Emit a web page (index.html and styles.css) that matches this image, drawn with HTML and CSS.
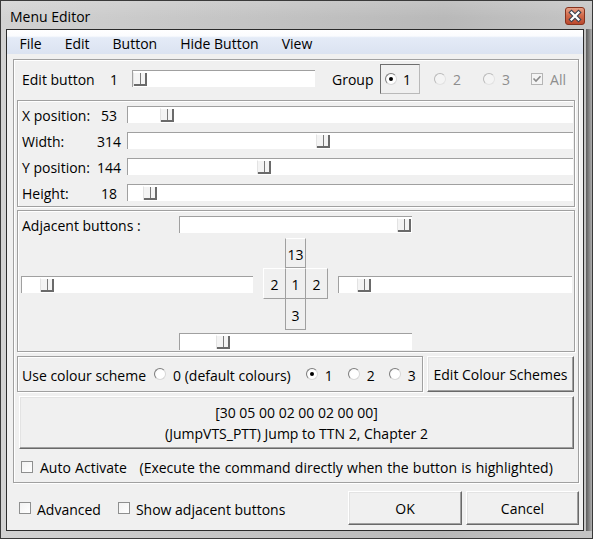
FILE: index.html
```html
<!DOCTYPE html>
<html>
<head>
<meta charset="utf-8">
<title>Menu Editor</title>
<link rel="stylesheet" href="styles.css">
</head>
<body>
<div class="window">
  <div class="titlebar">
    <span class="title">Menu Editor</span>
    <svg class="close" width="20" height="18" viewBox="0 0 20 18">
      <defs>
        <linearGradient id="cg" x1="0" y1="0" x2="0" y2="1">
          <stop offset="0" stop-color="#e8a48a"/>
          <stop offset="0.45" stop-color="#d26c4d"/>
          <stop offset="1" stop-color="#b9462c"/>
        </linearGradient>
      </defs>
      <rect x="0.5" y="0.5" width="19" height="17" rx="2.5" fill="url(#cg)" stroke="#86321d"/>
      <path d="M6.5 5.5 L13.5 12.5 M13.5 5.5 L6.5 12.5" stroke="#3d4250" stroke-width="4.4" stroke-linecap="square" fill="none"/>
      <path d="M6.5 5.5 L13.5 12.5 M13.5 5.5 L6.5 12.5" stroke="#ffffff" stroke-width="2.2" stroke-linecap="square" fill="none"/>
    </svg>
  </div>
  <div class="frame">
    <div class="client">
      <div class="menubar">
        <span class="menu-item">File</span>
        <span class="menu-item">Edit</span>
        <span class="menu-item">Button</span>
        <span class="menu-item">Hide Button</span>
        <span class="menu-item">View</span>
      </div>
      <div class="content">
        <div class="outer etched">
          <div class="row-edit">
            <span class="edit-label">Edit button</span>
            <span class="edit-num">1</span>
            <div class="slider edit-slider"><i class="thumb" style="left:0px"></i></div>
            <span class="group-label">Group</span>
            <div class="groupbox">
              <span class="opt"><i class="rb on"></i>1</span>
            </div>
            <span class="opt dis opt-g2"><i class="rb"></i>2</span>
            <span class="opt dis opt-g3"><i class="rb"></i>3</span>
            <span class="opt dis opt-all"><i class="cb checked"><svg width="10" height="10" viewBox="0 0 10 10"><path d="M1.5 4.5 L4 7 L8.5 2.2" stroke="#8a8a8a" stroke-width="1.6" fill="none"/></svg></i>All</span>
          </div>

          <div class="pos-box etched">
            <div class="pos-row"><span class="lbl">X position:</span><span class="num">53</span><div class="slider"><i class="thumb" style="left:32px"></i></div></div>
            <div class="pos-row"><span class="lbl">Width:</span><span class="num">314</span><div class="slider"><i class="thumb" style="left:188px"></i></div></div>
            <div class="pos-row"><span class="lbl">Y position:</span><span class="num">144</span><div class="slider"><i class="thumb" style="left:129px"></i></div></div>
            <div class="pos-row"><span class="lbl">Height:</span><span class="num">18</span><div class="slider"><i class="thumb" style="left:15px"></i></div></div>
          </div>

          <div class="adj-box etched">
            <span class="adj-label">Adjacent buttons :</span>
            <div class="slider adj-top"><i class="thumb" style="left:217px"></i></div>
            <div class="slider adj-left"><i class="thumb" style="left:18px"></i></div>
            <div class="cells">
              <span class="cell c-up">13</span>
              <span class="cell c-left">2</span>
              <span class="cell c-mid">1</span>
              <span class="cell c-right">2</span>
              <span class="cell c-down">3</span>
            </div>
            <div class="slider adj-right"><i class="thumb" style="left:18px"></i></div>
            <div class="slider adj-bottom"><i class="thumb" style="left:36px"></i></div>
          </div>

          <div class="colour-row">
            <div class="colour-box etched">
              <span class="colour-label">Use colour scheme</span>
              <span class="opt opt-c0"><i class="rb"></i>0 (default colours)</span>
              <span class="opt opt-c"><i class="rb on"></i>1</span>
              <span class="opt opt-c"><i class="rb"></i>2</span>
              <span class="opt opt-c3"><i class="rb"></i>3</span>
            </div>
            <button class="btn edit-cs">Edit Colour Schemes</button>
          </div>

          <button class="btn cmd">
            <span class="cmd-line">[30 05 00 02 00 02 00 00]</span>
            <span class="cmd-line">(JumpVTS_PTT) Jump to TTN 2, Chapter 2</span>
          </button>

          <div class="auto-row">
            <i class="cb"></i><span class="auto-text">Auto Activate&nbsp;&nbsp; (Execute the command directly when the button is highlighted)</span>
          </div>
        </div>

        <div class="bottom-row">
          <span class="opt opt-adv"><i class="cb"></i>Advanced</span>
          <span class="opt opt-show"><i class="cb"></i>Show adjacent buttons</span>
          <span class="spacer"></span>
          <button class="btn ok">OK</button>
          <button class="btn cancel">Cancel</button>
        </div>
      </div>
    </div>
    <div class="frame-right"></div>
  </div>
</div>
</body>
</html>
```

FILE: styles.css
```css
* {
  box-sizing: border-box;
  margin: 0;
  padding: 0;
}

html, body {
  width: 593px;
  height: 539px;
  overflow: hidden;
  background: #ffffff;
}

body {
  font-family: "Open Sans", "Noto Sans", sans-serif;
  font-size: 14px;
  color: #000;
}

.window {
  width: 593px;
  height: 539px;
  display: flex;
  flex-direction: column;
  border: 1px solid #3a3a3a;
  background: linear-gradient(to right, #d2d2d2 0%, #c6c6c6 35%, #b9b9b9 75%, #c4c4c4 100%);
}

.titlebar {
  height: 28px;
  flex: none;
  display: flex;
  align-items: center;
  padding: 0 7px 0 9px;
  background: linear-gradient(to bottom, rgba(255,255,255,0.15), rgba(255,255,255,0) 60%);
}

.title {
  flex: 1;
  line-height: 26px;
  padding-top: 3px;
  color: #000;
}

.close {
  flex: none;
  margin-top: 2px;
}

.frame {
  flex: 1;
  display: flex;
  padding: 0 0 7px 5px;
}

.client {
  width: 578px;
  flex: none;
  display: flex;
  flex-direction: column;
  border: 1px solid #2b2b2b;
  background: #f0f0f0;
}

.frame-right {
  flex: 1;
  margin-left: 2px;
  background: linear-gradient(to right, #5c5c5c, #8a8a8a 60%, #b0b0b0);
}

.menubar {
  height: 24px;
  flex: none;
  display: flex;
  padding-left: 1px;
  background: linear-gradient(to bottom, #ffffff 0%, #fbfcfe 25%, #e4ebf7 32%, #dbe3f1 100%);
}

.menu-item {
  padding: 4px 11.5px 0;
  line-height: 20px;
}

.content {
  flex: 1;
  display: flex;
  flex-direction: column;
  padding: 5px 4px 0 6px;
}

.etched {
  border: 1px solid #a0a0a0;
  box-shadow: inset 1px 1px #ffffff, 1px 1px #ffffff;
}

.outer {
  height: 424px;
  flex: none;
  display: flex;
  flex-direction: column;
  padding: 0 3px;
}

/* text nudged to sit on the same baseline as the original UI font */
.row-edit > span,
.pos-row > span,
.colour-box > span,
.auto-text,
.bottom-row .opt,
.adj-label,
.cell {
  padding-top: 2px;
}

/* ---------- sliders ---------- */
.slider {
  position: relative;
  height: 17px;
  background: #ffffff;
  border-top: 1px solid #a0a0a0;
  border-left: 1px solid #a0a0a0;
}

.thumb {
  position: absolute;
  top: 1px;
  width: 14px;
  height: 14px;
  background: #f4f4f4;
  border-top: 1px solid #ffffff;
  border-left: 1px solid #e3e3e3;
  box-shadow: inset -2px -2px #6a6a6a;
}

.thumb::after {
  content: "";
  position: absolute;
  left: 6px;
  top: 0;
  width: 1px;
  height: 11px;
  background: #7a7a7a;
}

/* ---------- check / radio ---------- */
.opt {
  display: flex;
  align-items: center;
  gap: 7px;
  white-space: nowrap;
}

.opt.dis {
  color: #8d8d8d;
}

.rb {
  position: relative;
  flex: none;
  width: 12px;
  height: 12px;
  border-radius: 50%;
  border: 1px solid;
  border-color: #7d7d7d #d8d8d8 #d8d8d8 #7d7d7d;
  background: radial-gradient(circle at 60% 60%, #ffffff 0%, #ffffff 50%, #ececec 100%);
}

.rb.on::after {
  content: "";
  position: absolute;
  left: 3px;
  top: 3px;
  width: 4px;
  height: 4px;
  border-radius: 50%;
  background: #000;
}

.dis .rb {
  border-color: #b9b9b9 #e2e2e2 #e2e2e2 #b9b9b9;
  background: #f4f4f4;
}

.cb {
  flex: none;
  display: flex;
  align-items: center;
  justify-content: center;
  width: 12px;
  height: 12px;
  border: 1px solid #8e8f8f;
  background: linear-gradient(135deg, #f2f2f2, #ffffff);
}

.opt .cb {
  margin-top: -2px;
}

.dis .cb {
  border-color: #b5b5b5;
  background: #f4f4f4;
}

.opt .rb {
  margin-top: -2px;
}

/* ---------- row 1 ---------- */
.row-edit {
  height: 37px;
  flex: none;
  display: flex;
  align-items: center;
  padding-left: 5px;
  margin-bottom: 3px;
}

.edit-label {
  width: 88px;
  flex: none;
}

.edit-num {
  width: 22px;
  flex: none;
}

.edit-slider {
  width: 183px;
  flex: none;
}

.group-label {
  width: 48px;
  margin-left: 17px;
  flex: none;
}

.groupbox {
  width: 40px;
  height: 30px;
  flex: none;
  display: flex;
  align-items: center;
  padding-left: 4px;
  border: 1px solid;
  border-color: #6e6e6e #b9b9b9 #b9b9b9 #6e6e6e;
}

.groupbox .opt {
  gap: 6px;
  padding-top: 2px;
}

.opt-g2 {
  margin-left: 14px;
}

.opt-g3 {
  margin-left: 22px;
}

.opt-all {
  margin-left: 21px;
}

/* ---------- position box ---------- */
.pos-box {
  height: 107px;
  flex: none;
  display: flex;
  flex-direction: column;
  padding: 0 1px 0 4px;
}

.pos-row {
  height: 26px;
  display: flex;
  align-items: center;
}

.lbl {
  width: 74px;
  flex: none;
}

.num {
  width: 26px;
  flex: none;
  text-align: center;
}

.pos-row .slider {
  flex: 1;
  margin-left: 5px;
}

/* ---------- adjacent box ---------- */
.adj-box {
  height: 142px;
  flex: none;
  margin-top: 3px;
  padding: 5px 1px 1px 3px;
  display: grid;
  grid-template-columns: 232px 10px 65px 10px 234px;
  grid-template-rows: 17px 5px 92px 3px 17px;
}

.adj-label {
  grid-column: 1;
  grid-row: 1;
  align-self: center;
  margin-left: 1px;
  white-space: nowrap;
}

.adj-top {
  grid-column: 3;
  grid-row: 1;
  justify-self: center;
  width: 233px;
}

.adj-bottom {
  grid-column: 3;
  grid-row: 5;
  justify-self: center;
  width: 233px;
}

.adj-left {
  grid-column: 1;
  grid-row: 3;
  align-self: center;
}

.adj-right {
  grid-column: 5;
  grid-row: 3;
  align-self: center;
}

.cells {
  grid-column: 3;
  grid-row: 3;
  display: grid;
  grid-template-columns: 22px 21px 22px;
  grid-template-rows: 30px 31px 31px;
}

.cell {
  display: flex;
  align-items: center;
  justify-content: center;
  border-top: 1px solid #ffffff;
  border-left: 1px solid #a0a0a0;
  border-right: 1px solid #a0a0a0;
  border-bottom: 1px solid #a0a0a0;
}

.c-up { grid-column: 2; grid-row: 1; }
.c-left { grid-column: 1; grid-row: 2; border-left-color: #ffffff; border-right: none; }
.c-mid { grid-column: 2; grid-row: 2; }
.c-right { grid-column: 3; grid-row: 2; border-left: none; }
.c-down { grid-column: 2; grid-row: 3; border-top: none; }

/* ---------- colour row ---------- */
.colour-row {
  height: 36px;
  flex: none;
  margin-top: 4px;
  display: flex;
  gap: 4px;
}

.colour-box {
  width: 406px;
  flex: none;
  display: flex;
  align-items: center;
  padding-left: 4px;
}

.opt-c0 {
  margin-left: 8px;
}

.opt-c {
  margin-left: 15px;
}

.opt-c3 {
  margin-left: 14px;
}

.btn {
  font: inherit;
  color: #000;
  background: #f0f0f0;
  border: 1px solid;
  border-color: #ffffff #696969 #696969 #ffffff;
  box-shadow: inset -1px -1px #a0a0a0, inset 1px 1px #e3e3e3;
}

.edit-cs {
  width: 147px;
  flex: none;
}

.cmd {
  height: 53px;
  flex: none;
  margin: 4px 1px 0 2px;
  display: flex;
  flex-direction: column;
  align-items: center;
  justify-content: center;
}

.cmd-line {
  line-height: 21px;
}

.auto-row {
  flex: 1;
  display: flex;
  align-items: center;
  gap: 7px;
  padding: 2px 0 0 4px;
  white-space: nowrap;
}

.auto-text {
  word-spacing: 0.6px;
}

.auto-row .cb {
  margin-top: 0;
}

/* ---------- bottom row ---------- */
.bottom-row {
  flex: 1;
  display: flex;
  align-items: center;
  padding: 3px 0 0 6px;
}

.bottom-row .opt {
  gap: 6px;
}

.opt-show {
  margin-left: 17px;
}

.spacer {
  flex: 1;
}

.ok {
  width: 114px;
  height: 34px;
  flex: none;
}

.cancel {
  width: 113px;
  height: 34px;
  flex: none;
  margin-left: 4px;
}
```
